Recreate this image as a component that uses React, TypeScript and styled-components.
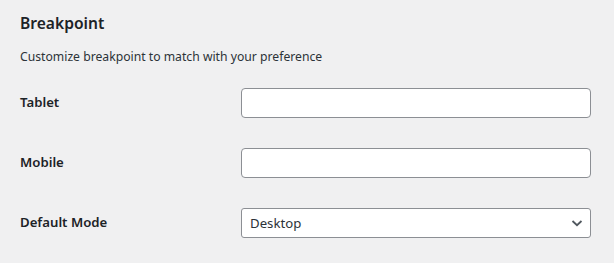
import React, { useState } from 'react';
import styled, { createGlobalStyle } from 'styled-components';

const GlobalStyle = createGlobalStyle`
	html, body {
		margin: 0;
		padding: 0;
		background: #f0f0f1;
	}
	body {
		font-family: 'Noto Sans', 'Open Sans', 'Liberation Sans', sans-serif;
		color: #1d2327;
	}
`;

const Wrap = styled.div`
	padding: 12px 23px 0 20px;
	box-sizing: border-box;
	width: 614px;
	height: 263px;
`;

const Title = styled.h2`
	margin: 0;
	font-size: 15.6px;
	line-height: 22px;
	font-weight: 600;
	color: #1d2327;
`;

const Description = styled.p`
	margin: 13px 0 0;
	font-size: 12.2px;
	line-height: 19px;
	color: #2c3338;
`;

const FormTable = styled.div`
	display: grid;
	grid-template-columns: 221px 1fr;
	margin-top: 7px;
`;

const Label = styled.label`
	padding-top: 20px;
	height: 60px;
	box-sizing: border-box;
	font-size: 13.2px;
	line-height: 18px;
	font-weight: 600;
	color: #1d2327;
`;

const Field = styled.div`
	padding: 15px 0;
	height: 60px;
	box-sizing: border-box;
`;

const TextInput = styled.input`
	display: block;
	width: 350px;
	height: 30px;
	box-sizing: border-box;
	margin: 0;
	padding: 0 8px;
	border: 1px solid #8c8f94;
	border-radius: 4px;
	background: #fff;
	font-family: inherit;
	font-size: 13.2px;
	color: #2c3338;
	outline: none;
`;

const SelectBox = styled.div`
	position: relative;
	width: 350px;
	height: 30px;
`;

const Select = styled.select`
	display: block;
	width: 100%;
	height: 30px;
	box-sizing: border-box;
	margin: 0;
	padding: 0 24px 0 8px;
	border: 1px solid #8c8f94;
	border-radius: 3px;
	background: #fff;
	font-family: inherit;
	font-size: 13.2px;
	line-height: 28px;
	color: #2c3338;
	appearance: none;
	outline: none;
`;

const Chevron = styled.svg`
	position: absolute;
	right: 8px;
	top: 9px;
	pointer-events: none;
`;

export default function App() {
	const [tablet, setTablet] = useState('');
	const [mobile, setMobile] = useState('');
	const [mode, setMode] = useState('desktop');

	return (
		<>
			<GlobalStyle />
			<Wrap>
				<Title>Breakpoint</Title>
				<Description>Customize breakpoint to match with your preference</Description>

				<FormTable>
					<Label htmlFor="bp-tablet">Tablet</Label>
					<Field>
						<TextInput id="bp-tablet" value={tablet} onChange={e => setTablet(e.target.value)} />
					</Field>

					<Label htmlFor="bp-mobile">Mobile</Label>
					<Field>
						<TextInput id="bp-mobile" value={mobile} onChange={e => setMobile(e.target.value)} />
					</Field>

					<Label htmlFor="bp-mode">Default Mode</Label>
					<Field>
						<SelectBox>
							<Select id="bp-mode" value={mode} onChange={e => setMode(e.target.value)}>
								<option value="desktop">Desktop</option>
								<option value="tablet">Tablet</option>
								<option value="mobile">Mobile</option>
							</Select>
							<Chevron width="12" height="12" viewBox="0 0 12 12">
								<path d="M1.5 4 L6 8.2 L10.5 4" fill="none" stroke="#50575e" strokeWidth="1.8" />
							</Chevron>
						</SelectBox>
					</Field>
				</FormTable>
			</Wrap>
		</>
	);
}
